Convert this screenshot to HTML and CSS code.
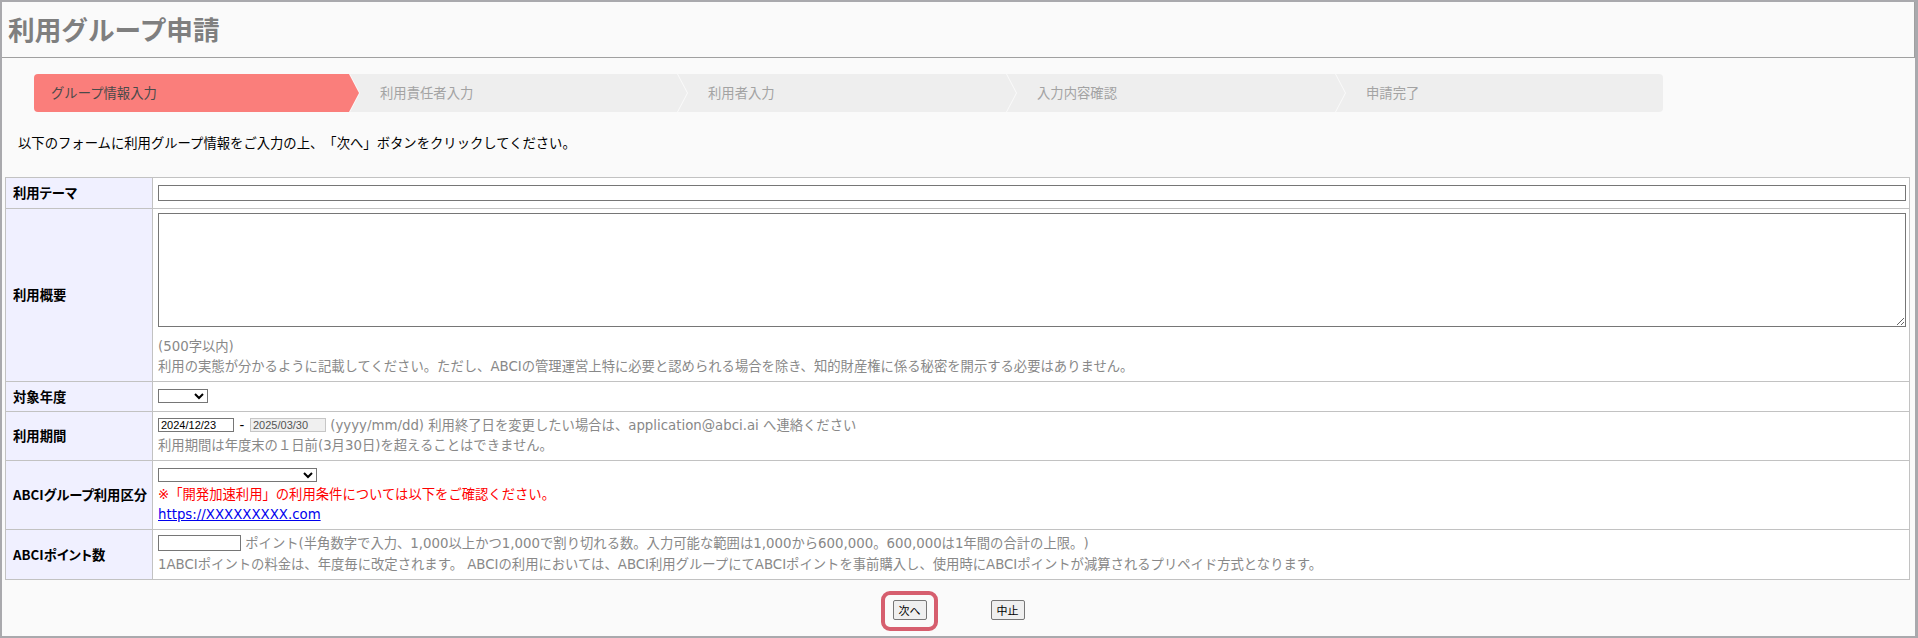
FILE: index.html
```html
<!DOCTYPE html>
<html lang="ja">
<head>
<meta charset="utf-8">
<title>利用グループ申請</title>
<link rel="stylesheet" href="styles.css">
</head>
<body>
<div class="page">
  <header class="header">
    <h1 class="title">利用グループ申請</h1>
  </header>

  <ol class="steps">
    <li class="step step-active">グループ情報入力</li>
    <li class="step step-2">利用責任者入力</li>
    <li class="step step-3">利用者入力</li>
    <li class="step step-4">入力内容確認</li>
    <li class="step step-last">申請完了</li>
  </ol>

  <p class="intro">以下のフォームに利用グループ情報をご入力の上、「次へ」ボタンをクリックしてください。</p>

  <table class="form">
    <colgroup>
      <col class="col-label">
      <col>
    </colgroup>
    <tr>
      <th>利用テーマ</th>
      <td class="cell"><input class="text-full" type="text"></td>
    </tr>
    <tr>
      <th>利用概要</th>
      <td class="cell">
        <textarea class="summary"></textarea>
        <div class="hint hint-first">(500字以内)</div>
        <div class="hint">利用の実態が分かるように記載してください。ただし、ABCIの管理運営上特に必要と認められる場合を除き、知的財産権に係る秘密を開示する必要はありません。</div>
      </td>
    </tr>
    <tr>
      <th>対象年度</th>
      <td class="cell"><select class="sel sel-year"><option></option></select></td>
    </tr>
    <tr>
      <th>利用期間</th>
      <td class="cell">
        <div class="line"><input class="date" type="text" value="2024/12/23"><span class="dash">-</span><input class="date date-off" type="text" value="2025/03/30" disabled><span class="hint"> (yyyy/mm/dd) 利用終了日を変更したい場合は、application@abci.ai へ連絡ください</span></div>
        <div class="hint">利用期間は年度末の１日前(3月30日)を超えることはできません。</div>
      </td>
    </tr>
    <tr>
      <th>ABCIグループ利用区分</th>
      <td class="cell">
        <select class="sel sel-kind"><option></option></select>
        <div class="note">※「開発加速利用」の利用条件については以下をご確認ください。</div>
        <div class="line"><a class="link" href="#">https://XXXXXXXXX.com</a></div>
      </td>
    </tr>
    <tr>
      <th>ABCIポイント数</th>
      <td class="cell">
        <div class="line line-tall"><input class="points" type="text"><span class="hint"> ポイント(半角数字で入力、1,000以上かつ1,000で割り切れる数。入力可能な範囲は1,000から600,000。600,000は1年間の合計の上限。)</span></div>
        <div class="hint">1ABCIポイントの料金は、年度毎に改定されます。 ABCIの利用においては、ABCI利用グループにてABCIポイントを事前購入し、使用時にABCIポイントが減算されるプリペイド方式となります。</div>
      </td>
    </tr>
  </table>

  <div class="actions">
    <span class="btn-wrap"><button class="btn" type="button">次へ</button><span class="highlight"></span></span>
    <button class="btn" type="button">中止</button>
  </div>
</div>
</body>
</html>
```

FILE: styles.css
```css
html, body {
  margin: 0;
  padding: 0;
}

body {
  font-family: "DejaVu Sans", "Noto Sans CJK JP", sans-serif;
  font-size: 13.333px;
  line-height: 20px;
  color: #000;
  background: #fafafa;
  text-spacing-trim: space-all;
}

.page {
  box-sizing: border-box;
  width: 1918px;
  height: 638px;
  border: 2px solid #a9a9ad;
  border-right-width: 3px;
  background: #fafafa;
  overflow: hidden;
}

.header {
  box-sizing: border-box;
  height: 56px;
  border-right: 1px solid #a0a0a0;
  border-bottom: 1px solid #a0a0a0;
  display: flex;
  align-items: center;
  padding-left: 6px;
}

.title {
  margin: 0;
  font-family: "Noto Sans CJK JP", sans-serif;
  font-size: 26.667px;
  font-weight: bold;
  line-height: 30px;
  color: #7f7f7f;
  position: relative;
  top: -1px;
}

/* stepper */
.steps {
  list-style: none;
  display: flex;
  margin: 16px 0 0 32px;
  padding: 0;
  width: 1629px;
  height: 38px;
  border-radius: 4px;
  overflow: hidden;
}

.step {
  flex: none;
  box-sizing: border-box;
  height: 38px;
  display: flex;
  align-items: center;
  margin-left: -9px;
  padding-left: 30px;
  font-family: "Noto Sans CJK JP", sans-serif;
  font-size: 13.333px;
  color: #a3a3a3;
  background: #eeeeee;
  clip-path: polygon(0 0, calc(100% - 10px) 0, 100% 50%, calc(100% - 10px) 100%, 0 100%, 10px 50%);
}

.step-active {
  width: 325px;
  margin-left: 0;
  padding-left: 17px;
  background: #fa7e7b;
  color: #4a4a4a;
  clip-path: polygon(0 0, calc(100% - 10px) 0, 100% 50%, calc(100% - 10px) 100%, 0 100%);
}

.step-2 { width: 337px; }
.step-3 { width: 338px; }
.step-4 { width: 338px; }

.step-last {
  flex: 1;
  clip-path: polygon(0 0, 100% 0, 100% 100%, 0 100%, 10px 50%);
}

.intro {
  margin: 21px 0 0 16px;
  line-height: 20px;
  font-family: "Noto Sans CJK JP", sans-serif;
}

/* form table */
.form {
  margin: 24px 0 0 3px;
  width: 1905px;
  border-collapse: collapse;
  table-layout: fixed;
  background: #fff;
}

.col-label {
  width: 147px;
}

.form th,
.form td {
  border: 1px solid #c2c2c2;
}

.form th {
  background: #f0f0ff;
  text-align: left;
  vertical-align: middle;
  padding: 0 7px;
  font-family: "Noto Sans CJK JP", sans-serif;
  font-feature-settings: "palt";
  font-size: 13.333px;
  font-weight: bold;
  color: #000;
  white-space: nowrap;
}

.cell {
  padding: 4px 3px 4px 5px;
  vertical-align: top;
  background: #fff;
}

.text-full {
  display: block;
  box-sizing: border-box;
  width: 100%;
  height: 16px;
  margin: 3px 0;
  padding: 0 2px;
  border: 1px solid #767676;
  border-radius: 0;
  font-size: 11px;
  background: #fff;
}

.summary {
  display: block;
  box-sizing: border-box;
  width: 100%;
  height: 114px;
  margin: 0;
  padding: 2px;
  border: 1px solid #767676;
  border-radius: 0;
  background: #fff;
  font-size: 13px;
}

.hint {
  color: #888;
  white-space: nowrap;
}

.hint-first {
  margin-top: 10px;
}

.line {
  height: 20px;
  white-space: nowrap;
}

.line-tall {
  height: 21px;
}

.sel {
  display: block;
  box-sizing: border-box;
  height: 14px;
  margin: 3px 0;
  padding: 0;
  border: 1px solid #767676;
  border-radius: 0;
  background: #fff;
  font-size: 10px;
  color: #000;
}

.sel-year {
  width: 50px;
  margin-bottom: 4px;
}

.sel-kind {
  width: 159px;
}

.date {
  box-sizing: border-box;
  width: 76px;
  height: 14px;
  margin: 0;
  padding: 0 2px;
  border: 1px solid #767676;
  border-radius: 0;
  background: #fff;
  font-family: "Liberation Sans", sans-serif;
  font-size: 11px;
  color: #000;
  vertical-align: middle;
  position: relative;
  top: -1px;
}

.date-off {
  background: #f0f0f0;
  border-color: #c6c6c6;
  color: #545454;
}

.dash {
  display: inline-block;
  width: 16px;
  text-align: center;
  color: #000;
}

.note {
  color: #ff0000;
  line-height: 20px;
  white-space: nowrap;
}

.link {
  color: #0000ee;
  text-decoration: underline;
}

.points {
  box-sizing: border-box;
  width: 83px;
  height: 16px;
  margin: 0;
  padding: 0 2px;
  border: 1px solid #767676;
  border-radius: 0;
  background: #fff;
  font-size: 11px;
  vertical-align: middle;
  position: relative;
  top: -1px;
}

/* buttons */
.actions {
  display: flex;
  justify-content: center;
  gap: 64px;
  margin-top: 20px;
}

.btn-wrap {
  position: relative;
  display: inline-block;
  height: 20px;
}

.btn {
  box-sizing: border-box;
  height: 20px;
  margin: 0;
  padding: 0 5px;
  border: 1px solid #767676;
  border-radius: 2px;
  background: #efefef;
  font-family: "Noto Sans CJK JP", sans-serif;
  font-size: 11px;
  line-height: 16px;
  color: #000;
}

.highlight {
  position: absolute;
  left: -12px;
  right: -11px;
  top: -9px;
  bottom: -11px;
  border: 4px solid #d65e6e;
  border-radius: 9px;
  pointer-events: none;
}
```
